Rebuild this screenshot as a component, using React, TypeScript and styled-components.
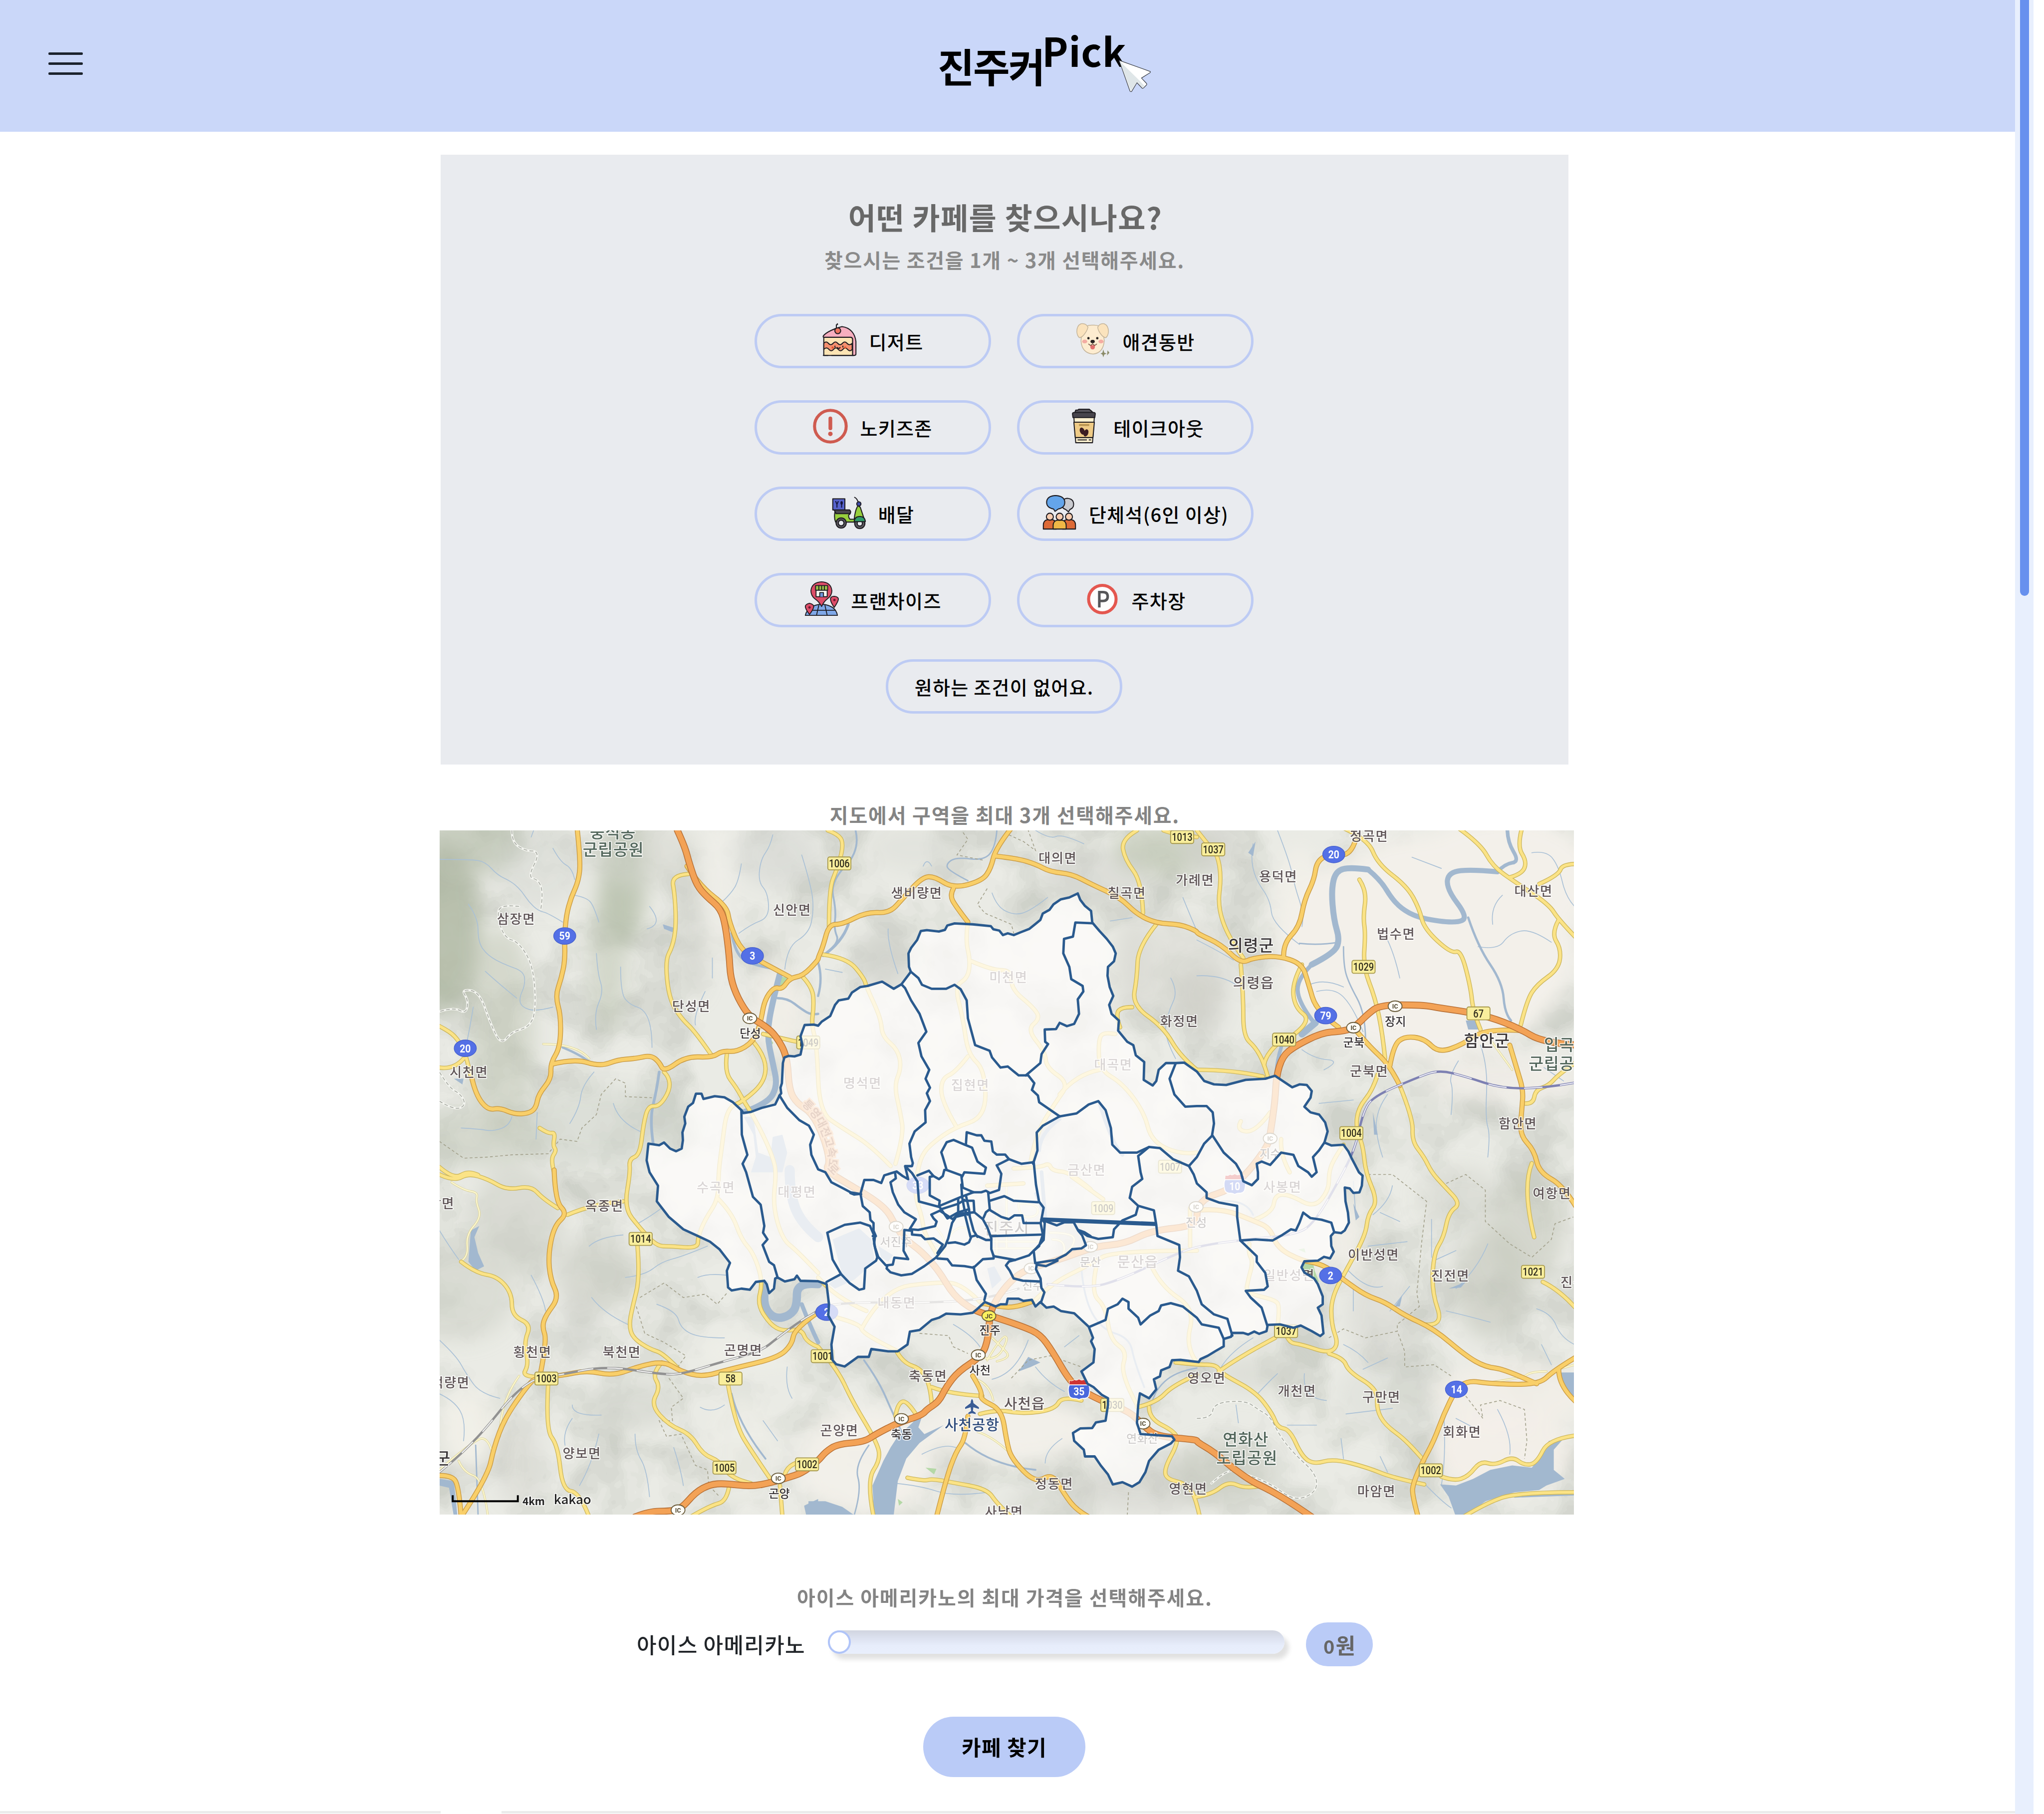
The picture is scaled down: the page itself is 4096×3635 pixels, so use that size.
import React from "react";
import styled, { createGlobalStyle } from "styled-components";

const FONT = '"Noto Sans CJK KR", "Noto Sans", sans-serif';

const GlobalStyle = createGlobalStyle`
  * { box-sizing: border-box; }
  html, body { margin: 0; padding: 0; background: #ffffff; overflow: hidden; }
  body { font-family: ${FONT}; color: #212529; }
  button { font-family: inherit; cursor: pointer; }
`;

/* ---------- page frame ---------- */

const Page = styled.div`
  display: grid;
  grid-template-columns: 4038px 37px 1fr;
  width: 4096px;
  height: 3635px;
  overflow: hidden;
  background: #ffffff;
`;

const Main = styled.div`
  display: flex;
  flex-direction: column;
  height: 3635px;
`;

const ScrollTrack = styled.div`
  display: flex;
  justify-content: center;
  background: #e8effd;
`;

const ScrollThumb = styled.div`
  width: 18px;
  height: 1194px;
  border-radius: 0 0 9px 9px;
  background: #6790ee;
`;

/* ---------- header ---------- */

const Header = styled.header`
  display: flex;
  align-items: flex-start;
  flex: none;
  height: 264px;
  padding-left: 97px;
  background: #cad7f9;
`;

const MenuButton = styled.div`
  display: flex;
  flex-direction: column;
  gap: 15px;
  width: 69px;
  margin-top: 105px;
`;

const MenuLine = styled.span`
  height: 5px;
  border-radius: 2px;
  background: #1c232d;
`;

const Logo = styled.div`
  display: flex;
  align-items: flex-start;
  margin-left: 1713px;
  color: #000000;
  font-weight: 700;
  font-size: 80px;
  line-height: 80px;
  white-space: nowrap;
`;

const LogoKorean = styled.span`
  margin-top: 90px;
  letter-spacing: -2.6px;
`;

const LogoLatin = styled.span`
  margin-top: 60px;
  margin-left: -4px;
  font-size: 79px;
  letter-spacing: 0.8px;
`;

const LogoCursor = styled.svg`
  width: 66px;
  height: 67px;
  margin: 119px 0 0 -16px;
`;

/* ---------- condition panel ---------- */

const Panel = styled.section`
  display: flex;
  flex-direction: column;
  align-items: center;
  flex: none;
  width: 2260px;
  height: 1222px;
  margin: 46px 0 0 883px;
  padding: 84px 2px 0 0;
  background: #e9ebef;
`;

const Title = styled.h1`
  margin: 0 -5px 0 0;
  color: #686868;
  font-weight: 700;
  font-size: 60px;
  line-height: 80px;
  letter-spacing: 1.5px;
`;

const Subtitle = styled.p`
  margin: 16px -2px 0 0;
  color: #8a8a8a;
  font-weight: 700;
  font-size: 40px;
  line-height: 60px;
  letter-spacing: 1.7px;
`;

const ConditionGrid = styled.div`
  display: grid;
  grid-template-columns: 474px 474px;
  gap: 64px 52px;
  margin: 79px 0 64px;
`;

const Condition = styled.button`
  display: flex;
  align-items: center;
  justify-content: center;
  gap: 24px;
  width: 474px;
  height: 109px;
  padding: 0;
  border: 5px solid #bdcbf4;
  border-radius: 55px;
  background: transparent;
  color: #000000;
  font-weight: 500;
  font-size: 38px;
  line-height: 56px;
  letter-spacing: 1.3px;
`;

const ConditionIcon = styled.svg`
  flex: none;
  width: 70px;
  height: 70px;
  margin-bottom: 6px;
`;

const Caption = styled.p<{ $top: number; $spacing: number }>`
  flex: none;
  width: 4027px;
  margin: ${(p) => p.$top}px 0 0;
  color: #848484;
  font-weight: 700;
  font-size: 40px;
  line-height: 58px;
  letter-spacing: ${(p) => p.$spacing}px;
  text-align: center;
`;

const MapView = styled.svg`
  display: block;
  flex: none;
  width: 2273px;
  height: 1371px;
  margin: 3px 0 0 881px;
  overflow: hidden;
`;

/* ---------- price ---------- */

const PriceRow = styled.div`
  display: flex;
  align-items: center;
  flex: none;
  height: 88px;
  margin: 22px 0 0 1276px;
`;

const PriceLabel = styled.label`
  width: 383px;
  margin-bottom: 3px;
  color: #212529;
  font-weight: 500;
  font-size: 43px;
  line-height: 60px;
  letter-spacing: 1.3px;
`;

const SliderTrack = styled.div`
  display: flex;
  width: 915px;
  height: 47px;
  margin-bottom: 9px;
  border-radius: 24px;
  background: linear-gradient(#d1d5e0 0%, #dbe0ee 30%, #e7edfb 65%, #e9effc 100%);
  box-shadow: 9px 11px 10px rgba(0, 0, 0, 0.12);
`;

const SliderThumb = styled.div`
  width: 46px;
  height: 47px;
  border: 4px solid #b0c4f8;
  border-radius: 50%;
  background: #ffffff;
`;

const PriceBadge = styled.div`
  display: flex;
  align-items: baseline;
  justify-content: center;
  width: 134px;
  height: 88px;
  margin-left: 43px;
  border-radius: 44px;
  background: #bacbf7;
  color: #666666;
  font-weight: 700;
  font-size: 43px;
  line-height: 88px;
`;

const PriceDigits = styled.span`
  margin-right: 2px;
  font-size: 38px;
`;

const SearchButton = styled.button`
  flex: none;
  width: 325px;
  height: 121px;
  margin: 101px 0 0 1850px;
  padding: 0 0 3px;
  border: 0;
  border-radius: 61px;
  background: #bacbf7;
  color: #000000;
  font-weight: 700;
  font-size: 42px;
  letter-spacing: 1.4px;
`;

const FooterEdge = styled.div`
  display: flex;
  flex: none;
  height: 5px;
  margin-top: 68px;
  padding-left: 883px;
  background: #ececec;
`;

const FooterTab = styled.div`
  width: 122px;
  background: #ffffff;
`;

/* ---------- condition icons ---------- */

const INK = "#1d1b20";

const CakeIcon = () => (
  <ConditionIcon viewBox="0 0 75 75">
    <g stroke={INK} strokeWidth="2.2" strokeLinejoin="round" strokeLinecap="round">
      <path d="M3 32h62v39H3z" fill="#fde4b4" />
      <path d="M3 45q5-6 10 0t10 0 10 0 10 0 10 0 11 0v13q-5 6-10 0t-10 0-10 0-10 0-10 0-11 0z" fill="#f5906f" />
      <path d="M2 29C8 21 28 12 42 9c18 2 28 15 30 32v27q0 3-4 3h-3V37q0-5-5-5H3q-2 0-1-3z" fill="#f6aebf" />
      <circle cx="33" cy="18" r="6.3" fill="#ef7460" />
      <path d="M30 11V5q4 0 2-2" fill="none" />
      <path d="M2 71h10M20 71h48" />
      <path d="M27 51v2M44 51v2M32 54q3 4 6 0" fill="none" />
    </g>
    <circle cx="22" cy="54" r="2.4" fill="#e4572f" />
    <circle cx="49" cy="54" r="2.4" fill="#e4572f" />
  </ConditionIcon>
);

const DogIcon = () => (
  <ConditionIcon viewBox="0 0 75 75">
    <g stroke="#c4b49a" strokeWidth="1.6">
      <path d="M14 16Q22 5 38 6q16-1 21 11l3 22Q60 66 38 68 14 66 12 40z" fill="#fdecd0" />
      <path d="M27 10Q22 1 12 3 3 7 3 20q1 10 6 13 6-1 12-10 5-7 6-13z" fill="#fbe3bd" />
      <path d="M48 10Q53 1 62 3q9 4 9 17-1 10-6 13-6-1-12-10-5-7-5-13z" fill="#fbe3bd" />
    </g>
    <circle cx="28" cy="34" r="2.6" fill="#2a2522" />
    <circle cx="47" cy="34" r="2.6" fill="#2a2522" />
    <ellipse cx="20" cy="41" rx="5.500" ry="4" fill="#f4aca3" />
    <ellipse cx="55" cy="41" rx="5.500" ry="4" fill="#f4aca3" />
    <ellipse cx="37" cy="41" rx="4.6" ry="3.6" fill="#26211f" />
    <path d="M32 49h10q1 9-5 9t-5-9z" fill="#e2706d" />
    <path d="M28 46q5 6 9 0 4 6 9 0" fill="none" stroke="#6a4a3c" strokeWidth="1.6" />
    <path d="M60 58l2 7 5 2-5 2-2 6-2-6-4-2 4-2zM69 60l4 5-5 6z" fill="#8b8b68" />
  </ConditionIcon>
);

const NoKidsIcon = () => (
  <ConditionIcon viewBox="0 0 75 75">
    <circle cx="37.5" cy="37.5" r="34" fill="none" stroke="#cf5b50" strokeWidth="6.5" />
    <path d="M37.5 21v21" stroke="#cf5b50" strokeWidth="8" strokeLinecap="round" />
    <circle cx="37.5" cy="54" r="4.8" fill="#cf5b50" />
  </ConditionIcon>
);

const CupIcon = () => (
  <ConditionIcon viewBox="0 0 75 75">
    <g stroke={INK} strokeWidth="2.2" strokeLinejoin="round">
      <path d="M16 18h44l-4 55H20z" fill="#fdf0cf" />
      <path d="M16 29h44l-3 33H19z" fill="#efcb86" />
      <path d="M20 3l4 0 3-2h22l6 5 3 5H17z" fill="#55525a" />
      <path d="M13 11q0-3 4-3h41q4 0 4 3l-1 8H14z" fill="#47444c" />
    </g>
    <path d="M27 35h22" stroke="#b99450" strokeWidth="4" />
    <ellipse cx="34" cy="48" rx="5" ry="8" fill="#3c1d22" transform="rotate(-22 34 48)" />
    <ellipse cx="42" cy="52" rx="5" ry="8" fill="#3c1d22" transform="rotate(20 42 52)" />
    <path d="M24 67h20M48 67h5" stroke={INK} strokeWidth="2" />
  </ConditionIcon>
);

const ScooterIcon = () => (
  <ConditionIcon viewBox="0 0 75 75">
    <g stroke={INK} strokeWidth="2.200" strokeLinejoin="round" strokeLinecap="round">
      <path d="M50 5q6 3 8 12l9 35" fill="none" />
      <path d="M8 34h32q3 6-3 9 0 6 3 9h9q2-20 8-29l5 3 8 24q2 8-6 8H9Q5 48 8 34z" fill="#97cf3d" />
      <path d="M6 32h33q5 4 0 8H10z" fill="#4a474e" />
      <path d="M3 8h26v24H3z" fill="#5763cc" />
      <circle cx="59" cy="19" r="4.500" fill="#3f4aa8" />
      <circle cx="21" cy="60" r="11" fill="#5b585f" />
      <circle cx="21" cy="60" r="6" fill="#e8ebef" />
      <circle cx="61" cy="61" r="11" fill="#5b585f" />
      <circle cx="61" cy="61" r="5.500" fill="#e8ebef" />
      <path d="M49 57q1-11 12-11t12 11z" fill="#2f9c6a" />
    </g>
    <path d="M9 13l3 7 3-7M12 19v8M22 20v7" stroke="#14143a" strokeWidth="2.200" fill="none" />
    <ellipse cx="22" cy="17" rx="2.600" ry="4" fill="#14143a" />
  </ConditionIcon>
);

const GroupIcon = () => (
  <ConditionIcon viewBox="0 0 75 75">
    <g stroke={INK} strokeWidth="2.2" strokeLinejoin="round">
      <path d="M54 7q14 1 14 13 0 8-8 11l-3 5-6-5q-8-2-8-11 0-12 11-13z" fill="#c9cacf" />
      <path d="M29 1q20 1 20 15 0 11-14 14l-7 5-3-5Q10 27 10 16 10 2 29 1z" fill="#64a5ea" />
      <path d="M3 73V64q0-9 8-11h12q8 2 8 11v9z" fill="#dd6a37" />
      <path d="M44 73V64q0-9 8-11h12q8 2 8 11v9z" fill="#dd6a37" />
      <path d="M24 73V65q0-9 8-11h12q8 2 8 11v8z" fill="#efb746" />
      <ellipse cx="17" cy="46.500" rx="7.500" ry="7.500" fill="#f8cdb0" />
      <ellipse cx="38" cy="46.500" rx="7.500" ry="7.500" fill="#f8cdb0" />
      <ellipse cx="58" cy="46.500" rx="7.500" ry="7.500" fill="#f8cdb0" />
    </g>
  </ConditionIcon>
);

const FranchiseIcon = () => (
  <ConditionIcon viewBox="0 0 75 75">
    <g stroke={INK} strokeWidth="2" strokeLinejoin="round">
      <path d="M3 73q5-22 35-24 30 2 34 24z" fill="#7fa8e8" />
      <path d="M8 62h60M27 73l5-22M50 73l-5-22" fill="none" />
      <path d="M38 54Q33 44 23 37 15 30 15 20 17 2 38 1q20 1 22 19 0 10-9 17-9 7-13 17z" fill="#dc4d68" />
      <rect x="26" y="10" width="24" height="23" fill="#f4f6f2" />
      <path d="M25 9h26v10H25z" fill="#9cc24a" />
      <path d="M32 9v10M38 9v10M44 9v10" />
      <path d="M34 33v-9h8v9" fill="#6f96de" />
      <path d="M12 71Q3 59 3 54t9-7q9 2 9 7t-9 17z" fill="#dc4d68" />
      <path d="M65 56Q57 44 57 38t8-6q9 1 9 6t-9 18z" fill="#dc4d68" />
    </g>
    <circle cx="12" cy="56" r="2.6" fill="#6c1830" />
    <circle cx="65.500" cy="40" r="2.6" fill="#6c1830" />
  </ConditionIcon>
);

const ParkingIcon = () => (
  <ConditionIcon viewBox="0 0 75 75">
    <circle cx="37.5" cy="38" r="29.5" fill="#fdfdfd" stroke="#e4574f" strokeWidth="6.5" />
    <path d="M31 56V23h8q10 0 10 9.500t-10 9.500h-8" fill="none" stroke="#555659" strokeWidth="5.500" />
  </ConditionIcon>
);

const CONDITIONS: { label: string; Icon: React.FC }[] = [
  { label: "디저트", Icon: CakeIcon },
  { label: "애견동반", Icon: DogIcon },
  { label: "노키즈존", Icon: NoKidsIcon },
  { label: "테이크아웃", Icon: CupIcon },
  { label: "배달", Icon: ScooterIcon },
  { label: "단체석(6인 이상)", Icon: GroupIcon },
  { label: "프랜차이즈", Icon: FranchiseIcon },
  { label: "주차장", Icon: ParkingIcon },
];

/* ---------- map geometry ----------
   Every shape is a list of points; a "X:" prefix switches to tile X,
   whose local units are converted to map units. */

const TILES: Record<string, [number, number, number, number]> = {
  A: [951, 1780, 1.912, 2.063],
  B: [1771, 1780, 1.912, 2.063],
  C: [2591, 1780, 1.889, 2.063],
  D: [951, 2540, 1.912, 2.063],
  E: [1771, 2540, 1.912, 2.063],
  F: [2591, 2540, 1.889, 2.063],
  G: [1841, 2420, 3, 3],
};

const at = (tile: string, u: number, v: number): [number, number] => {
  const [x, y, sx, sy] = TILES[tile];
  return [+(x + u / sx).toFixed(1), +(y + v / sy).toFixed(1)];
};

const trace = (src: string, close = false) => {
  let tile = "A";
  const pts: string[] = [];
  src
    .trim()
    .split(/\s+/)
    .forEach((tok) => {
      let t = tok;
      if (t[1] === ":") {
        tile = t[0];
        t = t.slice(2);
      }
      const [u, v] = t.split(",").map(Number);
      pts.push(at(tile, u, v).join(" "));
    });
  return "M" + pts.join("L") + (close ? "Z" : "");
};

/* smooth variant: rounds every corner through segment midpoints */
const curve = (src: string) => {
  const p = trace(src)
    .slice(1)
    .split("L")
    .map((s) => s.split(" ").map(Number));
  if (p.length < 3) return trace(src);
  let d = `M${p[0][0]} ${p[0][1]}`;
  for (let i = 1; i < p.length - 1; i++) {
    const a = p[i];
    const b = p[i + 1];
    const f = i === p.length - 2 ? 1 : 0.5;
    d += `Q${a[0]} ${a[1]} ${a[0] + (b[0] - a[0]) * f} ${a[1] + (b[1] - a[1]) * f}`;
  }
  return d;
};

const HIGHWAYS = [
  "A:985,40 1015,110 1035,190 1065,285 1105,335 1165,390 1185,470 1200,600 1205,700 1235,790 1285,875 1350,915 1395,960 1440,1050 1448,1200 1480,1260 1540,1300 B:20,1400 50,1520 E:30,-10 120,50 230,120 290,175 320,240 360,300 430,355 500,440 560,550 640,615 710,640 850,690 920,725 970,800 1040,930 1090,975 1180,1025 1290,1070 1345,1130 1400,1180 1568,1195 F:0,1205 70,1250 150,1325 230,1385 290,1415 390,1480 470,1540",
  "C:1560,1000 1420,990 1310,920 1200,875 1100,850 1000,835 925,820 750,820 700,860 640,925 590,938 510,945 400,1005 350,1050 325,1140 320,1250 300,1400 290,1450 210,1568 F:130,80 40,110 0,160 E:1568,240 1380,260 1270,320 1150,330 1000,390 870,430 800,480 735,570 710,640 705,740 680,820 580,890 530,960 500,1025 450,1060 430,1085 330,1120 240,1170 190,1205 80,1215 30,1250 0,1290 D:1500,1345 1440,1365 1380,1385 1290,1405 1180,1390 1120,1395 1060,1430 1000,1505 950,1515 870,1515 810,1540",
];

const MAIN_ROADS = [
  "A:570,30 585,180 575,270 545,340 525,420 518,520 520,620 505,700 480,780 503,870 500,1010 460,1080 463,1150 410,1220 400,1280 370,1305 310,1308 250,1280 200,1290 150,1220 135,1150",
  "A:465,1085 560,1060 665,1095 740,1065 810,1060 875,1045 910,1075 930,1120 1020,1050 1130,1055 1170,1025 1230,1030 1300,985 1330,900 1345,800 1385,740 1420,750 1450,700 1505,690 1568,620 B:0,610 20,560 45,460 100,460 200,405 295,410 350,345 430,250 480,245 560,300 680,265 715,210 735,120 800,30",
  "A:1450,695 1380,655 1320,620 1245,570 1200,450 1190,380 1080,290 1025,200",
  "B:560,300 545,330 570,380 620,450",
  "B:735,155 820,165 900,190 960,225 1050,235 1130,280 1250,340 1320,415 1400,455 1500,460 1568,490 C:0,500 100,550 180,635 230,610 330,600 430,635 455,720 490,850 580,920",
  "C:355,600 355,545 420,470 440,350 480,260 490,180 540,145 630,155 650,80",
  "C:640,920 700,1000 790,1090 830,1180",
  "C:790,1090 805,1000 850,960 930,970 990,1035 1090,995 1160,940 1280,930 1330,935",
  "C:1280,1000 1310,1110 1335,1200 1330,1280 1320,1400 1380,1470 1400,1568 F:1500,60 1560,170",
  "D:475,-10 480,130 530,185 475,240 450,370 460,480 495,560 440,640 425,690 445,750 420,890",
  "D:90,1540 200,1360 225,1230 270,1100 360,960 400,915 500,910 610,885 720,910 830,865 930,845 1000,890 1090,915 1200,880 1400,830 1460,770 1470,700 1568,625",
  "D:0,1355 50,1355 80,1400 90,1540",
  "E:680,585 740,600 820,605 880,580",
  "E:490,1540 530,1370 570,1250 610,1190 620,1090",
  "E:640,910 680,980 670,1015 760,1060 780,1200 800,1280 900,1390 970,1345 1020,1440 1070,1510 1120,1540",
  "F:0,170 100,160 240,220 300,250 330,340 430,395 490,405 540,430 600,480 690,550 770,580 850,640 970,700 1100,820 1180,870 1260,880 1390,945",
  "F:1560,820 1460,885 1400,950 1200,945 1110,930 1060,970 1010,1080 970,1200 920,1300 885,1390 880,1440 905,1540",
  "F:1480,880 1480,960 1560,1035",
];

const ROADS = [
  "A:1030,235 960,240 975,330 980,470 965,560 935,620 950,790 1000,880 1060,940 1130,1050",
  "A:0,915 45,940 80,980 110,1040 130,1140",
  "A:0,1100 60,1110 100,1060",
  "A:1190,1040 1180,1120 1230,1190 1260,1250 1290,1300 1340,1400 1380,1500 1395,1568 D:1380,150 1420,300 1480,350 1568,450",
  "A:1300,985 1350,1050 1350,1160 1260,1250 1190,1280 1170,1450 1155,1568 D:1155,120 1100,210 1070,290 1070,340 950,330 900,330 830,250 765,160 790,0 A:785,1510 830,1490 845,1350 865,1270 910,1275 955,1200 950,1140 930,1120",
  "D:1155,120 1210,180 1250,300 1300,360 1340,490 1315,590 1370,680 1420,710 1500,700 1520,760 1568,780",
  "D:530,190 640,140 760,130",
  "D:820,330 830,470 800,600 785,680 800,740 870,790 930,810 1000,890",
  "D:920,850 880,900 915,960 875,1040 950,1130 1040,1170 1090,1260 1160,1290 1210,1370 1290,1390",
  "D:0,10 60,40 120,5 200,30 280,80 380,60 430,120 490,160",
  "A:0,1545 60,1600 120,1560 160,1580",
  "D:90,400 150,450 240,465 300,540 300,640 380,680 350,760 370,860 340,915 420,915",
  "D:450,950 440,1150 490,1220 510,1420 580,1430 620,1540",
  "D:1195,950 1225,1130 1300,1260 1370,1370",
  "D:1410,1400 1420,1540",
  "D:1200,1400 1190,1470 1120,1490 1040,1540",
  "D:1430,1350 1450,1280 1568,1290",
  "A:415,1370 450,1395 480,1390 470,1450 485,1470 460,1510 475,1568",
  "A:1340,950 1420,970 1480,985 1568,1000",
  "A:1500,690 1545,740 1550,830 1540,905 B:-5,1000 5,1300 100,1370 220,1450 300,1540",
  "B:40,40 90,60 105,110 80,210 45,300 45,470",
  "B:20,595 120,610 190,700 200,740 260,880 265,960 330,1020 345,1100 315,1180 340,1300 355,1400 320,1530",
  "B:620,450 610,530 630,620 620,700 565,735 600,880 620,1040 690,1110 695,1320 560,1370 470,1440 430,1490 410,1568 E:400,100 430,200 440,280 500,380",
  "B:635,625 720,665 800,665 800,750 890,830 920,880 865,930 940,1030 945,1100 1040,1170 980,1260 900,1400 880,1520",
  "B:1230,950 1180,940 1160,980 1165,1110 1260,1170 1350,1300 1380,1430 1500,1490 1568,1480",
  "B:1165,1110 1070,1130 1000,1220",
  "B:620,1050 570,1120 510,1150 510,1250 570,1360",
  "B:1320,40 1255,80 1270,170 1340,270 1345,410",
  "B:1400,460 1325,560 1320,700 1300,820 1430,920 1500,1050 1568,1110",
  "B:1300,830 1245,830 1235,880 1250,920",
  "B:1430,40 1480,60 1568,70",
  "C:0,40 50,110 85,150 100,250 85,380 130,520 190,610",
  "C:180,640 190,780 190,960 240,1010 275,1080 290,1140",
  "C:0,1110 150,1110 270,1140",
  "C:340,985 280,1040 275,1090",
  "C:430,640 390,720 400,830 470,890 400,950",
  "C:665,260 695,310 680,430 690,500 680,650 730,790 760,950 770,1060",
  "C:600,30 700,80 740,190 860,290 910,390 930,480 1040,590 1080,575 1120,740 1130,850 1160,930",
  "C:1070,30 1160,100 1210,200 1300,270 1440,370 1480,440 1560,530",
  "C:1330,30 1310,110 1350,180 1330,235 1280,250",
  "C:1400,280 1480,240 1495,190 1560,190",
  "C:1480,440 1450,500 1490,570 1480,660 1390,730 1350,800 1325,910",
  "C:830,1180 885,1330 880,1430 930,1500 960,1568 F:1010,60 1080,140 1030,180 1010,290 970,360 960,530 1010,690 930,680",
  "C:740,1130 720,1200 660,1280 650,1370 680,1450 690,1568 F:740,130 700,190 690,280 620,420 550,560 550,680 580,770 540,810 430,770 370,760 360,700",
  "C:1560,1070 1480,1130 1440,1180 1385,1200 1375,1265 1335,1260",
  "C:600,1445 560,1510 540,1568 F:540,80 480,160 380,100 320,100 310,180 240,210",
  "C:180,1340 160,1380 240,1390 300,1300",
  "C:345,1420 340,1490 380,1568",
  "F:1370,-40 1330,70 1380,290",
  "F:1415,490 1490,530 1560,620",
  "F:330,690 340,600 320,570 200,540 210,480 230,400 210,360 215,320",
  "F:90,890 180,820 320,740",
  "E:1480,850 1568,860 F:80,860 100,900 240,980 310,1080 330,1140 380,1150 430,1270 480,1305 560,1280 700,1320 800,1365 930,1395",
  "F:540,810 600,830 620,890 740,970 735,1060 770,1130 860,1200 930,1290",
  "F:1000,1360 1050,1380 1110,1360 1160,1290 1220,1310 1290,1270 1340,1310 1390,1300 1440,1190 1560,1175",
  "F:1090,1540 1180,1480 1310,1430 1560,1430",
  "F:0,1450 60,1440 130,1380 200,1415 270,1400",
  "E:1568,905 1470,950 1400,1030 1320,1050",
  "E:1370,1050 1370,1100 1480,1160 1490,1210 1435,1320 1440,1370 1520,1390 1560,1440 1580,1540",
  "E:0,780 80,880 140,1020 240,1200 260,1280 200,1380 230,1540",
  "E:325,800 350,850 430,880 465,960 470,1030",
  "E:320,1090 330,1030 370,1020 410,1090",
  "E:470,960 540,990 680,1000",
  "E:670,1080 740,1060 850,1080 980,1060 1010,1000 1090,1020",
  "E:370,1365 440,1380 470,1370 550,1385 700,1415 740,1480 800,1540",
  "E:180,700 270,520 500,490 600,500 680,590",
  "E:0,470 70,560 200,620",
  "E:80,650 180,680 180,720 330,800",
  "E:890,580 960,500 1130,410 1220,350 1568,350",
  "E:1380,420 1420,510 1560,610 1520,780 1568,850",
  "E:1150,430 1130,540 1190,600 1210,750 1280,800 1250,900 1320,1040",
  "G:1060,335 1230,330 1290,300 1310,350 1430,360 1560,470",
  "E:1050,20 1180,120",
  "E:1540,160 1540,330",
  "E:700,60 850,50",
];

const STREETS = [
  "E:700,840 760,730 790,740 740,840 690,830",
  "E:720,740 760,780 800,830 740,845",
  "E:640,920 710,940 725,1020",
  "E:660,1160 720,1180 790,1250",
  "E:740,170 740,370",
  "E:780,60 780,340",
  "E:830,140 910,140 910,200 830,200 830,140",
  "E:720,310 920,310",
  "E:720,340 910,340",
  "E:960,270 1060,270 1060,330 1020,370",
  "E:970,300 1040,300 1010,380",
  "E:480,240 540,300 520,360",
  "E:450,310 520,340",
  "E:540,290 600,200 660,300",
  "D:50,45 100,80 160,90 150,130 175,200 110,280 120,380 85,400",
  "A:430,995 570,995 620,1060",
  "D:0,1330 150,1190 200,1190 215,1240",
  "D:80,1290 100,1340 180,1370 200,1530",
  "D:250,1180 250,1030 330,910",
  "F:1190,940 1330,920 1370,890 1430,890",
  "F:1480,880 1545,860",
  "C:1190,960 1290,1110",
];

const WATER_LINES: [number, string][] = [
  [13, "A:1410,680 1380,800 1355,950 1380,1080 1400,1180 1360,1260 1260,1300"],
  [5, "A:1400,790 1440,790 1500,840 1540,865 1568,860"],
  [6, "A:1210,500 1225,590 1290,640 1370,655"],
  [6, "A:885,1440 870,1330 900,1200 910,1120"],
  [5, "A:510,1010 590,1045 640,1090"],
  [4, "B:155,40 175,130 50,270 75,400 65,480 90,545 20,600"],
  [5, "B:0,630 20,700 0,780"],
  [6, "B:20,600 100,540 125,460"],
  [3, "B:740,40 735,110 690,175 570,160 530,190 540,220 620,265"],
  [13, "C:700,215 630,205 570,220 550,300 560,440 585,530 560,590 470,640"],
  [9, "C:480,630 410,700 415,810 480,900"],
  [15, "C:485,900 430,950"],
  [8, "C:345,1010 330,1060 325,1120"],
  [11, "C:700,215 750,260 800,350 850,400 920,435 1060,455 1110,430 1020,300 1030,225 1130,215 1230,225"],
  [8, "C:1230,225 1260,190 1320,180 1270,90 1270,30"],
  [5, "C:1110,430 1150,560 1250,720 1260,860 1285,890"],
  [3, "C:600,560 600,640 620,720 690,860 690,980"],
  [3, "C:420,545 500,555 580,540"],
  [18, "D:1350,500 1340,570 1360,630 1400,655 1450,640 1480,600 1480,490 1568,500"],
  [9, "D:1500,590 1540,700 1568,760"],
  [22, "D:1450,-10 1450,100 1500,230 1568,290"],
  [4, "E:190,840 250,930 310,1080 350,1170"],
  [3, "E:210,1220 150,1310 180,1420 150,1530"],
  [4, "E:610,1210 720,1310 900,1330"],
  [4, "D:1210,990 1240,1130 1350,1280"],
  [3, "D:150,1220 160,1530"],
  [3, "E:1568,875 1480,890 1390,980 1380,1040"],
  [8, "B:1000,1330 920,1390 915,1470"],
  [8, "B:1165,1260 1220,1450 1260,1490"],
  [7, "G:1205,500 1250,600 1260,670"],
  [8, "E:925,0 940,200"],
  [4, "E:1090,430 1100,560 1170,700 1290,740 1310,850 1350,960"],
  [4, "F:100,130 200,120 230,190"],
  [4, "F:1545,1440 1300,1450"],
];

const CREEKS = [
  "A:0,170 130,170 190,180 240,240 300,270 340,310 370,360 410,400 450,410 510,450",
  "A:470,120 500,180 550,210 560,260",
  "A:390,40 380,70",
  "A:560,330 610,340 640,380 660,450",
  "A:650,590 655,680 680,760 640,860 650,930",
  "A:750,650 750,770 790,820 850,840 880,930 880,1010",
  "A:120,370 160,430 160,540 200,600 270,640 350,670 355,730 330,790 340,830 400,850 470,830",
  "A:190,670 240,720 320,790",
  "A:140,830 130,900 115,980",
  "A:1380,60 1370,110 1330,170 1320,270 1360,320 1365,430 1290,460 1240,500",
  "A:1250,190 1240,260 1210,320 1170,360",
  "A:1500,150 1540,290 1550,400 1530,500 1440,560 1430,660",
  "A:1130,610 1130,700",
  "A:870,380 930,460 860,480",
  "A:1100,760 1050,870 1060,910",
  "A:640,1120 590,1180 580,1280 540,1350",
  "A:90,1370 170,1375 220,1385 290,1360 300,1320",
  "A:405,1300 400,1420",
  "A:720,1260 740,1340 830,1385",
  "B:435,200 450,160 470,200",
  "B:290,480 285,540 330,680",
  "B:720,320 740,380 810,420 880,400 950,340",
  "B:900,40 960,80 1010,55 1100,100",
  "B:1510,340 1540,420 1568,490",
  "B:1460,700 1490,760 1450,850 1430,960 1480,1060",
  "B:30,660 100,675",
  "B:1210,445 1300,430",
  "C:230,100 220,160 240,260 300,350 310,460 420,550",
  "C:330,40 380,180 400,290 440,420 430,470",
  "C:0,530 90,580 150,620",
  "C:0,690 100,685 160,730",
  "C:880,160 1000,210",
  "C:780,530 810,600 830,700",
  "C:1150,560 1230,575 1280,500 1370,480 1450,540",
  "C:1210,460 1200,380 1250,330",
  "C:1370,140 1430,130 1480,200 1510,340 1545,380",
  "C:460,730 520,700 600,740",
  "C:490,760 560,740 640,830 680,940",
  "C:1160,1000 1190,1090 1180,1330 1200,1400 1190,1500",
  "C:1070,1070 1030,1140 1050,1200 1040,1310",
  "C:780,1220 740,1280 730,1400 760,1500",
  "C:430,1020 480,1060 590,1070 520,1110",
  "C:500,1260 640,1245",
  "C:1420,1100 1500,1160",
  "D:0,260 40,330 80,390",
  "D:820,230 870,200 920,160",
  "D:620,330 660,290 760,280",
  "D:770,470 850,460 920,400 1010,375 1110,330",
  "D:1070,470 1110,450 1190,460",
  "D:380,460 430,560 440,620",
  "D:630,560 680,630 780,680",
  "D:900,590 980,620 1000,700 1080,740 1180,740",
  "D:0,750 70,820 110,900 170,990 250,1010",
  "D:0,990 60,1020 110,1110 100,1200",
  "D:550,1040 550,1090 670,1085",
  "D:550,1100 510,1160 520,1220",
  "D:810,1170 810,1240 860,1330 870,1450",
  "D:1080,1050 1130,1080 1180,1040",
  "D:970,1230 1000,1330 1010,1400",
  "D:1340,1110 1400,1200",
  "D:1440,870 1430,960 1460,1010",
  "D:660,1170 630,1310 580,1400",
  "E:560,680 640,730 670,780",
  "E:870,750 820,900 720,925",
  "E:900,870 950,940 1020,980",
  "E:1080,730 1020,780",
  "E:940,1300 940,1240 1010,1190",
  "E:430,1260 520,1210 570,1230",
  "E:320,1390 420,1400 560,1450 700,1430",
  "F:640,40 650,190",
  "F:800,60 790,130 720,190",
  "F:750,180 830,220",
  "F:700,330 860,310",
  "F:620,440 700,530 760,510",
  "F:640,500 640,620",
  "F:870,510 790,620",
  "F:960,210 960,380",
  "F:980,390 1060,350",
  "F:1060,520 1150,430 1190,320",
  "F:1390,610 1450,630 1490,740 1545,770",
  "F:1020,620 1100,640 1200,670",
  "F:1410,770 1450,860",
  "F:100,870 140,800 230,740",
  "F:600,770 660,800 700,850",
  "F:780,830 680,880",
  "F:240,1000 290,940 330,900",
  "F:440,900 430,1010 530,1020",
  "F:610,1080 800,1055",
  "F:1010,1080 1020,1280 1000,1400",
  "F:1230,1060 1290,1180 1280,1260",
  "F:590,1190 600,1280",
  "F:750,1270 780,1340",
  "F:930,1390 1000,1470 1040,1500",
  "F:370,1130 490,1130",
  "F:160,1040 170,1120",
  "F:1060,1100 1130,1140",
];

const LAKES = [
  "E:440,1060 415,1140 440,1170 520,1130 420,1210 365,1280 330,1380 312,1540 232,1540 225,1400 270,1290 300,1230 330,1180 390,1120",
  "E:-40,1470 30,1470 100,1495 160,1540 -40,1540",
  "D:1510,1490 1568,1460 1568,1540 1520,1540",
  "F:995,1395 1060,1400 1130,1370 1200,1330 1290,1310 1370,1320 1400,1280 1440,1200 1500,1190 1460,1240 1460,1330 1505,1370 1430,1400 1400,1420 1300,1430 1180,1470 1100,1540 1060,1540 1030,1450",
  "F:1490,895 1560,895 1560,1030 1495,960",
  "D:130,260 165,240 145,290 160,360 185,420 150,440 120,400",
  "D:0,1370 60,1380 75,1540 60,1540 40,1410 0,1400",
  "E:60,300 170,250 220,300 235,400 150,480 70,520 45,500 95,440",
  "A:1260,1320 1300,1400 1310,1500 1290,1568 1420,1568 1440,1480 1420,1400 1380,1410 1370,1500 1320,1480 1300,1320",
  "E:830,890 870,825 920,850 880,870",
  "E:700,430 720,520 760,480 730,420",
  "E:250,330 310,370 290,400 260,380",
  "A:925,460 970,475 965,495 930,480",
  "A:60,1150 100,1150 95,1175",
  "F:1030,520 1100,490 1080,515",
  "F:640,140 665,200 650,215",
  "F:810,600 840,550 830,600",
  "C:1100,890 1150,890 1160,930 1110,930",
  "C:210,140 240,90 230,155",
  "C:720,1300 740,1400 725,1400",
];

const TRAILS = [
  "B:600,50 620,80 575,150 690,175",
  "B:700,300 660,370 690,410 800,460 810,500",
  "B:790,60 850,90 900,130 870,40",
  "A:0,1430 100,1505 200,1500 300,1490 450,1485 500,1420 570,1430 590,1370 650,1310 670,1220 730,1150 770,1170 770,1230 880,1235",
  "D:830,560 930,495 1010,560 1100,545 1150,590 1190,540",
  "D:815,600 850,720 930,760 1020,820 980,880",
  "D:950,920 1010,1010 960,1050 965,1110 910,1110 940,1180 1000,1170 1060,1310 1110,1330 1115,1400 1160,1450",
  "F:540,740 600,700 690,740 820,710 850,800 850,870 970,860 1040,910",
  "F:1100,1000 1170,1100 1160,1040 1240,1020 1340,1060 1350,1200 1340,1280",
  "F:700,10 800,10 940,130 920,310 900,540 910,600 820,680 820,710",
  "F:1020,50 1100,10 1180,80 1180,220 1280,320 1370,380 1450,300 1465,230 1540,200",
  "E:800,920 870,840 960,820 1090,870",
  "E:420,720 540,730 560,780 620,810",
  "E:1285,1430 1280,1530",
];

const PARK_EDGES = [
  "A:300,40 300,90 350,130 420,135 365,250 410,260 430,320 420,390",
  "A:330,380 250,370 240,430 270,520 330,540 390,650 400,850 370,920 300,940 255,1000 210,900 165,760 90,750 120,800 110,860 60,830 0,850",
  "A:0,1120 40,1190 90,1220 110,1270 60,1290 0,1250",
  "F:0,1100 60,1100 70,1030 200,1020 250,1060 300,1090 340,1180 400,1260 490,1350 490,1430 400,1470 300,1390 200,1350 130,1320 60,1390",
];

const CITY_EDGE =
  "A:865,1440 910,1447 930,1435 955,1462 980,1474 1003,1462 1008,1425 1006,1390 1018,1350 1014,1320 1030,1275 1050,1258 1062,1217 1085,1217 1093,1240 1140,1228 1180,1233 1215,1255 1250,1290 1258,1303 1290,1298 1335,1280 1390,1265 1408,1225 1415,1215 1412,1190 1418,1170 1422,1080 1428,1055 1445,1048 1470,1050 1495,1042 1503,1000 1495,960 1512,910 1550,908 1568,913 " +
  "B:15,895 50,870 70,820 85,800 125,792 140,765 175,740 205,735 265,716 313,748 345,728 384,672 376,650 374,590 385,565 410,530 425,490 450,486 500,492 525,485 535,465 565,456 640,460 715,468 725,482 750,488 765,508 785,500 810,508 840,495 875,480 900,458 920,440 930,412 958,395 975,370 1005,348 1040,340 1075,322 1085,350 1105,378 1130,400 1135,452 1165,490 1195,525 1220,560 1232,590 1225,625 1200,650 1198,690 1207,740 1222,780 1205,820 1215,860 1245,890 1242,935 1280,985 1305,1000 1315,1045 1350,1075 1348,1155 1385,1180 1400,1160 1410,1110 1440,1080 1480,1080 1515,1078 1568,1118 " +
  "C:30,1160 70,1175 120,1178 200,1155 280,1150 320,1137 345,1155 390,1188 420,1175 450,1178 470,1205 465,1235 440,1275 465,1300 500,1310 525,1345 535,1385 522,1435 550,1448 600,1445 620,1475 633,1505 645,1530 663,1568 " +
  "F:678,15 675,60 665,90 640,92 625,72 605,68 608,130 618,180 622,225 605,260 590,272 562,268 548,285 550,330 560,355 545,385 520,378 495,395 440,398 428,425 440,448 480,475 495,500 515,555 515,590 495,605 510,640 518,720 505,732 470,710 425,685 395,695 340,680 290,682 285,710 255,722 235,712 210,725 190,718 145,718 140,735 110,745 110,778 75,800 45,820 15,835 8,848 " +
  "E:1500,838 1465,840 1455,870 1420,885 1415,912 1390,925 1400,970 1370,1010 1332,988 1325,1040 1320,1120 1335,1170 1400,1175 1465,1180 1475,1195 1460,1212 1410,1240 1370,1290 1355,1340 1330,1385 1300,1405 1260,1385 1220,1395 1200,1350 1170,1310 1145,1270 1105,1270 1100,1240 1060,1200 1055,1165 1085,1145 1135,1143 1150,1118 1190,1110 1200,1040 1200,1010 1175,995 1140,960 1115,945 1090,890 1140,850 1145,790 1130,755 1138,740 1120,690 1090,660 1060,630 1005,620 975,600 945,605 920,580 900,600 885,570 850,575 830,565 785,565 780,590 755,590 735,600 690,580 660,610 640,628 590,635 530,632 500,650 470,660 420,705 380,712 370,770 330,800 290,800 220,790 210,825 165,825 110,868 75,858 60,840 55,770 68,690 42,640 45,590 35,500 0,487 " +
  "D:1495,485 1480,462 1470,478 1430,488 1400,470 1390,475 1385,520 1365,540 1355,500 1345,485 1310,490 1285,525 1250,520 1210,528 1195,515 1190,440 1203,405 1160,345 1120,310 1070,285 1010,255 950,200 900,130 905,60 870,0 A:858,1515 865,1440";

const DISTRICT_EDGES = [
  "A:1250,1290 1252,1400 1275,1490 1255,1530 1270,1568 D:1298,110 1330,145 1345,240 1340,270 1358,300 1338,325 1365,400 1385,415 1400,470",
  "A:1408,1225 1440,1280 1490,1335 1530,1360 1550,1400 1535,1445 1540,1490 1568,1555 E:30,0 55,45 100,70 135,90 178,98",
  "B:345,728 360,745 385,800 420,860 448,940 415,990 428,1050 460,1110 445,1150 463,1190 450,1215 463,1250 443,1290 445,1345 400,1385 378,1440 385,1500 G:405,300 400,320 355,320 375,405 340,385 300,355 220,380 200,430 150,410 90,410 65,500 25,505 0,495",
  "G:360,325 400,365 435,420 445,550 575,585",
  "B:384,672 415,700 430,730 470,748 530,748 565,730 590,750 615,800 620,880 650,1000 710,1025 720,1055 755,1100 785,1095 830,1135 870,1135 895,1170 885,1200 910,1225 915,1255 1000,1318",
  "B:1137,455 1065,452 1055,515 1018,525 1015,590 1040,650 1048,705 1095,735 1098,760 1075,795 1080,860 1060,905 1030,915 1000,900 985,928 938,930 940,985 952,995 925,1040 920,1080 860,1135",
  "B:1000,1318 1070,1305 1120,1265 1160,1250 1190,1290 1212,1370 1218,1445 1250,1480 1320,1480 1370,1455 1415,1460 1470,1510 1535,1540 1568,1500 C:30,1440 62,1405 70,1350 65,1300 40,1272 0,1272 B:1520,1275 1475,1220 1455,1150 1480,1082",
  "B:1000,1318 930,1360 905,1390 908,1470 890,1530 G:1190,290 1205,440 1225,550 1255,590 1240,670",
  "B:1370,1455 1325,1495 1335,1568 E:1342,30 1300,65 1290,115 1325,150 1390,170 1400,235 1405,285 1495,325 1498,380 1490,440 1535,465 1568,530 F:20,590 70,635 125,655 145,730",
  "E:1325,150 1315,190 1260,215 1225,255 1220,290 1160,298 1115,285 1085,262",
  "B:1535,1540 E:1555,10 1568,50 F:40,90 40,115 90,135 165,150 165,200 178,305 245,375 245,400 280,450 290,510 275,525 200,530 220,560 265,605 288,685",
  "C:65,1405 110,1480 160,1530 180,1568 F:190,40 225,58 250,30 250,0 C:245,1530 265,1520 300,1535 345,1480 395,1490 415,1540 455,1568 F:470,20 490,0 C:475,1500 500,1470 522,1435",
  "F:178,305 240,300 310,305 350,280 385,255 405,260 420,225 435,180 465,205 510,212 550,225 562,268",
  "E:1125,690 1190,660 1200,610 1240,590 1260,565 1285,580 1285,610 1325,650 1335,680 1375,640 1410,620 1420,595 1460,585 1510,600 1568,650 F:20,680 90,695 110,745",
  "G:65,500 80,580 125,620 130,670 150,690 150,740 165,775 145,775",
  "E:38,270 110,235 175,225 215,240 235,290 232,320 245,380 240,395 195,430 190,520 170,525 130,495 95,455 60,390 50,330 38,270",
  "E:35,490 95,455",
  "G:150,790 160,850 180,910 230,965 275,960 285,915 375,925 345,870 350,735 400,740",
  "G:240,965 235,985 260,1010 330,1030 400,1020 480,970 555,915 615,840 635,790 660,690 685,650 745,635",
  "G:290,365 295,400 260,425 275,490 310,570 350,620 425,665 385,730 440,735 550,710 560,680 540,660 525,635 580,610",
  "G:400,745 400,765 460,770 485,795 540,790 600,830 565,885",
  "G:435,380 510,350 540,385 575,405 600,385 610,345 625,345 600,260 590,230 625,165 670,150 740,180 790,200 825,290 880,330 870,370 740,360 725,390",
  "G:750,180 755,100 820,120 850,120 870,155 915,160 925,225 950,245 1005,245 1030,275 1110,305 1190,295",
  "G:1030,275 950,315 980,370 965,475 905,495 880,480 850,490 800,490 730,460 720,380 625,345",
  "G:540,385 515,390 515,510 580,545 575,580",
  "G:575,580 720,520 800,490",
  "G:590,600 700,565 740,540",
  "G:575,580 630,660 700,620 770,600",
  "G:720,440 725,520 740,600 760,635",
  "G:700,530 700,640",
  "G:750,510 770,600 775,640",
  "G:740,545 800,545 805,620 700,630",
  "G:580,610 665,665 690,640",
  "G:805,620 860,665 890,720 915,790",
  "G:745,640 780,780 815,770 880,800 915,800",
  "G:770,630 800,740 825,780",
  "G:895,495 905,600 880,620 865,655",
  "G:905,545 1000,515 1060,545 1220,555",
  "G:905,605 980,650 1030,665 1065,640 1115,640 1125,690 1235,690",
  "G:915,775 1250,765",
  "G:915,790 915,860 930,905 1070,930 1160,900 1210,850 1255,800 1262,690 1245,660 1235,690 1250,765 1225,840",
  "G:635,820 680,815 740,830 770,815 785,780",
  "G:565,920 630,925 660,965 740,970 800,980 860,925 930,920 930,900",
  "G:800,975 820,1060 880,1150 870,1190",
  "G:1260,675 1340,705 1390,685 1450,685 1480,740 1505,770 1530,835 1500,855 1440,860 1400,895 1330,930 1200,950 1190,870 1225,840",
  "G:1480,735 1520,750 1560,775",
  "G:1070,930 1030,940 1010,965 1035,1000 1060,1050 1120,1065 1235,1070",
  "G:1345,935 1270,970 1210,960 1205,990 1235,1050 1240,1110 1260,1140 1240,1200",
];

type Kind = "town" | "city" | "park" | "ic" | "air" | "eup";
const LABEL_STYLE: Record<Kind, { size: number; fill: string; spacing: number; weight: number }> = {
  town: { size: 28.5, fill: "#5f5557", spacing: 1.6, weight: 500 },
  eup: { size: 31, fill: "#5f5557", spacing: 1.2, weight: 500 },
  city: { size: 35, fill: "#3a3638", spacing: 1, weight: 500 },
  park: { size: 35, fill: "#52665b", spacing: 1, weight: 500 },
  ic: { size: 25, fill: "#3a3638", spacing: 0, weight: 500 },
  air: { size: 31.5, fill: "#2f4c7c", spacing: 0.6, weight: 500 },
};

type Anchor = "start" | "middle" | "end";
const LABELS: [Kind, string, string, number, number, Anchor?][] = [
  ["park", "A", "웅석봉", 718, 46],
  ["park", "A", "군립공원", 720, 124],
  ["town", "A", "삼장면", 318, 435],
  ["town", "A", "신안면", 1460, 395],
  ["town", "A", "단성면", 1043, 825],
  ["ic", "A", "단성", 1287, 947],
  ["town", "A", "시천면", 122, 1120],
  ["town", "B", "대의면", 992, 163],
  ["town", "B", "생비량면", 408, 320],
  ["town", "B", "칠곡면", 1278, 320],
  ["town", "B", "미천면", 788, 697],
  ["town", "B", "대곡면", 1222, 1087],
  ["town", "B", "집현면", 630, 1178],
  ["town", "B", "명석면", 184, 1170],
  ["town", "B", "금산면", 1112, 1557],
  ["town", "B", "가례면", 1560, 262],
  ["town", "B", "화정면", 1495, 893],
  ["town", "C", "정곡면", 705, 66],
  ["town", "C", "용덕면", 333, 245],
  ["city", "C", "의령군", 222, 553],
  ["town", "C", "법수면", 815, 503],
  ["eup", "C", "의령읍", 232, 722],
  ["town", "C", "대산면", 1377, 310],
  ["ic", "C", "장지", 812, 893],
  ["ic", "C", "군북", 642, 987],
  ["city", "C", "함안군", 1187, 980],
  ["park", "C", "입곡", 1420, 996, "start"],
  ["park", "C", "군립공원", 1357, 1082, "start"],
  ["town", "C", "군북면", 705, 1115],
  ["town", "C", "함안면", 1313, 1350],
  ["ic", "C", "지수", 300, 1485],
  ["town", "D", "청암면", 63, 138, "end"],
  ["town", "D", "적량면", 126, 940, "end"],
  ["city", "D", "하동군", 47, 1277, "end"],
  ["town", "D", "옥종면", 683, 150],
  ["town", "D", "수곡면", 1145, 68],
  ["town", "D", "대평면", 1480, 87],
  ["town", "D", "횡천면", 385, 803],
  ["town", "D", "북천면", 755, 803],
  ["town", "D", "곤명면", 1258, 795],
  ["town", "D", "양보면", 590, 1257],
  ["ic", "D", "곤양", 1407, 1435],
  ["ic", "E", "서진주", 322, 312],
  ["city", "E", "진주시", 780, 250],
  ["ic", "E", "문산", 1127, 400],
  ["eup", "E", "문산읍", 1323, 400],
  ["ic", "E", "진성", 1565, 223],
  ["ic", "E", "진주", 888, 505],
  ["town", "E", "내동면", 325, 583],
  ["ic", "E", "진주", 711, 705],
  ["ic", "E", "사천", 670, 885],
  ["town", "E", "축동면", 455, 910],
  ["eup", "E", "사천읍", 855, 1033],
  ["air", "E", "사천공항", 637, 1130],
  ["town", "E", "곤양면", 88, 1153],
  ["ic", "E", "축동", 345, 1170],
  ["town", "E", "정동면", 977, 1393],
  ["town", "E", "사남면", 770, 1517],
  ["ic", "E", "연화산", 1342, 1190],
  ["town", "E", "영현면", 1532, 1415],
  ["town", "F", "영오면", 40, 920],
  ["town", "F", "사봉면", 350, 65],
  ["town", "F", "여항면", 1453, 95],
  ["town", "F", "이반성면", 723, 368],
  ["town", "F", "일반성면", 378, 460],
  ["town", "F", "진전면", 1037, 463],
  ["town", "F", "진동면", 1487, 492, "start"],
  ["town", "F", "개천면", 410, 977],
  ["town", "F", "구만면", 755, 1003],
  ["town", "F", "회화면", 1085, 1160],
  ["park", "F", "연화산", 200, 1193],
  ["park", "F", "도립공원", 205, 1276],
  ["town", "F", "마암면", 735, 1425],
];

const NATIONAL: [string, string, number, number][] = [
  ["A", "59", 519, 512],
  ["A", "3", 1296, 601],
  ["A", "20", 107, 1014],
  ["C", "20", 560, 148],
  ["C", "79", 527, 868],
  ["E", "33", 413, 58],
  ["E", "2", 36, 625],
  ["F", "2", 547, 461],
  ["F", "14", 1062, 970],
];

const LOCAL: [string, string, number, number][] = [
  ["A", "1049", 1527, 988],
  ["B", "1006", 88, 188],
  ["B", "1013", 1507, 70],
  ["B", "1007", 1457, 1543],
  ["C", "1037", 67, 125],
  ["C", "1029", 682, 650],
  ["C", "1040", 357, 975],
  ["C", "67", 1152, 858],
  ["C", "1004", 632, 1393],
  ["D", "1014", 833, 298],
  ["D", "1003", 443, 922],
  ["D", "58", 1205, 922],
  ["D", "1005", 1180, 1320],
  ["D", "1002", 1522, 1305],
  ["D", "1001", 1587, 822],
  ["E", "1009", 1180, 160],
  ["E", "1030", 1218, 1040],
  ["F", "1021", 1375, 445],
  ["F", "1037", 365, 710],
  ["F", "1002", 957, 1332],
];

const JUNCTIONS: [string, number, number, boolean?][] = [
  ["A", 1285, 880],
  ["C", 811, 826],
  ["C", 641, 922],
  ["C", 300, 1417],
  ["D", 1403, 1368],
  ["D", 988, 1510],
  ["E", 323, 243],
  ["E", 1128, 333],
  ["E", 882, 430],
  ["E", 663, 817],
  ["E", 345, 1102],
  ["E", 1345, 1123],
  ["E", 1565, 155],
  ["E", 707, 642, true],
];

/* mountains: tile, u, v, rx, ry, colour, opacity */
type Patch = [string, number, number, number, number, string, number];
const MOUNTAINS: Patch[] = [
  ["A", 20, 480, 80, 180, "#a9b39c", 0.75],
  ["A", 150, 90, 110, 70, "#b3bba6", 0.6],
  ["A", 760, 250, 50, 150, "#aab59c", 0.65],
  ["A", 700, 600, 40, 170, "#bcc4b0", 0.5],
  ["A", 260, 950, 70, 230, "#bfc5b4", 0.5],
  ["A", 1050, 500, 35, 140, "#d0d2cc", 0.6],
  ["A", 850, 150, 120, 70, "#d3d5cd", 0.5],
  ["A", 700, 1350, 190, 80, "#cdd0c7", 0.45],
  ["A", 150, 1420, 160, 60, "#c2c8b8", 0.5],
  ["A", 1400, 150, 90, 70, "#d6d7d2", 0.6],
  ["A", 420, 200, 90, 90, "#d8d9d4", 0.5],
  ["B", 280, 620, 60, 60, "#cbccc6", 0.65],
  ["B", 1150, 250, 120, 60, "#d2d3cd", 0.55],
  ["B", 1450, 130, 120, 55, "#bfc6b4", 0.7],
  ["B", 1500, 650, 110, 110, "#dcdcd6", 0.6],
  ["B", 1300, 650, 40, 120, "#d3d3ce", 0.5],
  ["B", 400, 120, 100, 50, "#dddfd9", 0.6],
  ["C", 20, 800, 50, 80, "#cbccc5", 0.6],
  ["C", 60, 100, 60, 60, "#d3d4cf", 0.6],
  ["D", 320, 220, 100, 120, "#ced1c8", 0.6],
  ["D", 80, 550, 120, 100, "#d1d3c9", 0.6],
  ["D", 650, 450, 90, 80, "#cccec4", 0.6],
  ["D", 580, 680, 30, 80, "#cdcec8", 0.6],
  ["D", 780, 1050, 100, 50, "#d1d3cb", 0.6],
  ["D", 330, 1300, 50, 100, "#d8d9d2", 0.6],
  ["E", 1350, 1400, 150, 60, "#cfd0ca", 0.5],
  ["E", 950, 1480, 90, 40, "#d9dad3", 0.6],
  ["F", 1200, 500, 80, 120, "#c6c9be", 0.65],
  ["F", 1350, 250, 80, 120, "#c6c9be", 0.6],
  ["F", 1080, 120, 90, 70, "#d2d3cb", 0.5],
  ["F", 750, 650, 70, 100, "#d5d6cf", 0.5],
  ["F", 250, 900, 90, 40, "#d2d3cc", 0.5],
  ["F", 800, 1000, 120, 80, "#d8d9d2", 0.4],
  ["F", 100, 1350, 110, 70, "#c8cbc0", 0.65],
];

const PLAINS: Patch[] = [
  ["A", 1150, 300, 30, 170, "#f1f0e9", 0.7],
  ["A", 1400, 850, 60, 110, "#f2f0e9", 0.9],
  ["C", 950, 560, 320, 240, "#f3f0ea", 1],
  ["C", 1250, 250, 210, 130, "#f3f0ea", 1],
  ["C", 1250, 1150, 170, 50, "#f1eee8", 0.8],
  ["C", 420, 480, 60, 180, "#f3f0ea", 0.8],
  ["D", 120, 1150, 60, 90, "#f2f1e9", 0.9],
  ["D", 1250, 1250, 70, 120, "#eff0e8", 0.7],
  ["D", 1300, 800, 120, 40, "#eff0e8", 0.7],
  ["E", 200, 1300, 150, 120, "#f2f0ea", 0.95],
  ["E", 800, 1150, 190, 70, "#f2f0ea", 0.95],
  ["E", 750, 850, 80, 60, "#f1efe9", 0.8],
  ["F", 1280, 1000, 170, 70, "#f2eee8", 0.9],
  ["F", 1250, 1250, 150, 90, "#f3efe9", 0.95],
  ["F", 620, 300, 40, 100, "#f0ede7", 0.8],
];

const MapLabel = styled.text`
  font-family: ${FONT};
  paint-order: stroke;
  stroke: rgba(255, 255, 255, 0.75);
  stroke-width: 4px;
  stroke-linejoin: round;
`;

const ShieldText = styled.text`
  font-family: Roboto, "Liberation Sans", sans-serif;
  text-anchor: middle;
`;

const strokes = (list: string[], color: string, width: number) => (
  <g fill="none" stroke={color} strokeWidth={width} strokeLinecap="round" strokeLinejoin="round">
    {list.map((s, i) => (
      <path key={i} d={curve(s)} />
    ))}
  </g>
);

const patches = (list: Patch[]) => (
  <g filter="url(#relief)">
    {list.map(([t, u, v, rx, ry, c, o], i) => {
      const [cx, cy] = at(t, u, v);
      return <ellipse key={i} cx={cx} cy={cy} rx={rx} ry={ry} fill={c} opacity={o} />;
    })}
  </g>
);

const RAIL_WEST =
  "D:0,1340 130,1230 350,930 500,905 690,865 930,905 1010,900 1160,850 1330,800 1400,740 1500,660 1568,620 E:0,600 160,580 400,585 700,570 830,520";
const RAIL_EAST =
  "C:1560,1165 1440,1190 1250,1195 1100,1140 990,1110 900,1145 720,1230 680,1300 650,1450 600,1568 F:480,230 400,280 200,300 0,330 E:1450,380 1250,480 1120,520 950,500";
const EXPRESSWAY_NAME = "A:1500,1265 1545,1310 B:20,1400 50,1520 E:30,-5 130,60";

const RegionMap = () => {
  const edge = trace(CITY_EDGE, true);
  const [planeX, planeY] = at("E", 637, 1048);
  const [sx, sy] = at("D", 55, 1470);
  return (
    <MapView viewBox="951.5 1799.5 2456 1482" preserveAspectRatio="none">
      <defs>
        <filter id="relief" x="-20%" y="-20%" width="140%" height="140%">
          <feGaussianBlur stdDeviation="20" />
        </filter>
        <filter id="contours" x="0" y="0" width="100%" height="100%" colorInterpolationFilters="sRGB">
          <feTurbulence type="fractalNoise" baseFrequency="0.008" numOctaves="4" seed="11" />
          <feColorMatrix values="0 0 0 0 0.56  0 0 0 0 0.59  0 0 0 0 0.54  1.6 0 0 0 -0.3" />
          <feComponentTransfer>
            <feFuncA type="discrete" tableValues="0 0 0 0.03 0.06 0.1 0.15 0.2 0.25 0.3" />
          </feComponentTransfer>
        </filter>
        <path id="expressway" d={curve(EXPRESSWAY_NAME)} />
      </defs>
      <rect x="940" y="1790" width="2480" height="1500" fill="#eaebe5" />
      <rect x="940" y="1790" width="2480" height="1500" fill="#ffffff" filter="url(#contours)" />
      {patches(MOUNTAINS)}
      {patches(PLAINS)}

      <g fill="#b4d8a6">
        <path d={trace("A:1410,690 1440,700 1410,745", true)} />
        <path d={trace("A:1365,960 1382,990 1365,1015", true)} />
        <path d={trace("F:440,405 475,405 482,440 500,490 470,480 430,440", true)} />
        <path d={trace("E:445,1320 490,1325 480,1350", true)} />
        <path d={trace("E:330,1460 350,1475 335,1490", true)} />
        <path d={trace("F:415,345 440,340 445,360", true)} />
      </g>

      {strokes(CREEKS, "#a9c0d6", 1.8)}
      <g fill="none" stroke="#a2b8cf" strokeLinecap="round" strokeLinejoin="round">
        {WATER_LINES.map(([w, s], i) => (
          <path key={i} d={curve(s)} strokeWidth={w} />
        ))}
      </g>
      <g fill="#a2b8cf">
        {LAKES.map((s, i) => (
          <path key={i} d={trace(s, true)} />
        ))}
      </g>

      <g fill="none" stroke="#a3a18c" strokeWidth="1.8" strokeDasharray="6 5">
        {TRAILS.map((s, i) => (
          <path key={i} d={trace(s)} />
        ))}
      </g>
      {strokes(PARK_EDGES, "#f3f4ef", 5)}
      <g fill="none" stroke="#a0a39b" strokeWidth="1.600" strokeDasharray="8 5">
        {PARK_EDGES.map((s, i) => (
          <path key={i} d={curve(s)} />
        ))}
      </g>

      {strokes(STREETS, "#d8ce8e", 4.5)}
      {strokes(STREETS, "#fbf6cf", 2.8)}
      {strokes(ROADS, "#cdb75c", 9.4)}
      {strokes(ROADS, "#fbe386", 6.4)}
      {strokes(MAIN_ROADS, "#cb9c45", 11)}
      {strokes(MAIN_ROADS, "#f9cf69", 7.8)}

      {strokes([RAIL_WEST], "#929292", 5)}
      <path d={curve(RAIL_WEST)} fill="none" stroke="#f4f4f4" strokeWidth="2.4" strokeDasharray="34 30" />
      {strokes([RAIL_EAST], "#7d80b2", 5)}
      <path d={curve(RAIL_EAST)} fill="none" stroke="#eeeef6" strokeWidth="2.4" strokeDasharray="40 38" />

      {strokes(HIGHWAYS, "#b97136", 15)}
      {strokes(HIGHWAYS, "#f3a256", 11.6)}
      <text fontFamily={FONT} fontSize="24" fontWeight="700" fill="#9a5028" stroke="#f3b27c" strokeWidth="6" paintOrder="stroke">
        <textPath href="#expressway">통영대전고속도로</textPath>
      </text>

      {LABELS.map(([kind, t, text, u, v, anchor = "middle"], i) => {
        const st = LABEL_STYLE[kind];
        const [x, y] = at(t, u, v);
        return (
          <MapLabel
            key={i}
            x={x}
            y={y + st.size * 0.37}
            fontSize={st.size}
            fontWeight={st.weight}
            letterSpacing={st.spacing}
            fill={st.fill}
            textAnchor={anchor}
          >
            {text}
          </MapLabel>
        );
      })}

      {LOCAL.map(([t, text, u, v], i) => {
        const [x, y] = at(t, u, v);
        return (
          <g key={i}>
            <rect x={x - 25} y={y - 14} width="50" height="28" rx="4" fill="#f9ee9c" stroke="#a89a4e" strokeWidth="2" />
            <ShieldText
              x={x}
              y={y + 8.5}
              fontSize="24"
              fontWeight="500"
              fill="#2e2b1c"
              textLength={text.length * 11.2}
              lengthAdjust="spacingAndGlyphs"
            >
              {text}
            </ShieldText>
          </g>
        );
      })}

      {NATIONAL.map(([t, text, u, v], i) => {
        const [x, y] = at(t, u, v);
        return (
          <g key={i}>
            <ellipse cx={x} cy={y} rx="24" ry="18" fill="#5470e6" stroke="#4560cf" strokeWidth="1.500" />
            <ShieldText
              x={x}
              y={y + 8.5}
              fontSize="24"
              fontWeight="700"
              fill="#ffffff"
              textLength={text.length * 12}
              lengthAdjust="spacingAndGlyphs"
            >
              {text}
            </ShieldText>
          </g>
        );
      })}

      {JUNCTIONS.map(([t, u, v, hub], i) => {
        const [x, y] = at(t, u, v);
        return (
          <g key={i}>
            <ellipse cx={x} cy={y} rx="15" ry="11.500" fill={hub ? "#fbf15e" : "#fffef8"} stroke="#6a5c3c" strokeWidth="2" />
            <ShieldText x={x} y={y + 5} fontSize="13.500" fontWeight="700" fill="#4e452f">
              {hub ? "JC" : "IC"}
            </ShieldText>
          </g>
        );
      })}

      {([["E", "35", 1080, 975], ["F", "10", 155, 58]] as [string, string, number, number][]).map(([t, text, u, v]) => {
        const [x, y] = at(t, u, v);
        return (
          <g key={text} transform={`translate(${x} ${y})`}>
            <path
              d="M-20 -21q6 2 10-2 5 3 10-1 5 4 10 1 4 4 10 2l1 9q4 8 1 20-1 8-9 9-9 0-13 3-4-3-13-3-8-1-9-9-3-12 1-20z"
              fill="#4a68dd"
              stroke="#ffffff"
              strokeWidth="2"
            />
            <path d="M-20 -21q6 2 10-2 5 3 10-1 5 4 10 1 4 4 10 2l1 9h-42z" fill="#cf3434" />
            <path d="M-21 -12h42" stroke="#ffffff" strokeWidth="2" />
            <ShieldText x="0" y="11" fontSize="24" fontWeight="700" fill="#ffffff" textLength="24" lengthAdjust="spacingAndGlyphs">
              {text}
            </ShieldText>
          </g>
        );
      })}

      <path
        transform={`translate(${planeX} ${planeY})`}
        d="M0 -17q3 3 3 9l12 9v4L3 1 2 9l6 4v3L0 14l-8 2v-3l6-4-1-8-12 4v-4l12-9q0-6 3-9z"
        fill="#3a5c94"
        stroke="#ffffff"
        strokeWidth="1.500"
        paintOrder="stroke"
      />

      <path d={edge} fill="#fffefd" fillOpacity="0.76" stroke="#2a5a8e" strokeWidth="5.2" strokeLinejoin="round" />
      <g fill="none" stroke="#2a5a8e" strokeWidth="5.200" strokeLinejoin="round" strokeLinecap="round">
        {DISTRICT_EDGES.map((s, i) => (
          <path key={i} d={trace(s)} />
        ))}
        <path d={trace("E:928,211 1395,231")} strokeWidth="9" />
      </g>

      <path d={`M${sx} ${sy - 13}V${sy}H${sx + 141}V${sy - 13}`} fill="none" stroke="#000000" strokeWidth="4.200" />
      <MapLabel x={sx + 151} y={sy + 8} fontSize="22.500" fontWeight="700" fill="#222222">
        4km
      </MapLabel>
      <MapLabel x={sx + 219} y={sy + 6} fontSize="28" fontWeight="500" fill="#222222">
        kakao
      </MapLabel>
    </MapView>
  );
};

export default function App() {
  return (
    <>
      <GlobalStyle />
      <Page>
        <Main>
          <Header>
            <MenuButton>
              <MenuLine />
              <MenuLine />
              <MenuLine />
            </MenuButton>
            <Logo>
              <LogoKorean>진주커</LogoKorean>
              <LogoLatin>Pick</LogoLatin>
              <LogoCursor viewBox="1232 238 212 215">
                <path
                  d="M1237 244L1438 316Q1440 320 1436 324L1381 358L1413 392Q1418 399 1412 404L1393 423Q1388 427 1383 421L1352 388L1318 444Q1312 448 1307 442Z"
                  fill="#ffffff"
                  stroke="#3c4048"
                  strokeWidth="4"
                  strokeLinejoin="round"
                />
                <path d="M1240 248L1366 372L1400 408L1388 421L1352 384L1313 441Z" fill="#dfe6e8" />
              </LogoCursor>
            </Logo>
          </Header>

          <Panel>
            <Title>어떤 카페를 찾으시나요?</Title>
            <Subtitle>찾으시는 조건을 1개 ~ 3개 선택해주세요.</Subtitle>
            <ConditionGrid>
              {CONDITIONS.map(({ label, Icon }) => (
                <Condition key={label}>
                  <Icon />
                  {label}
                </Condition>
              ))}
            </ConditionGrid>
            <Condition>원하는 조건이 없어요.</Condition>
          </Panel>

          <Caption $top={71} $spacing={1.8}>
            지도에서 구역을 최대 3개 선택해주세요.
          </Caption>
          <RegionMap />

          <Caption $top={136} $spacing={1.9}>
            아이스 아메리카노의 최대 가격을 선택해주세요.
          </Caption>
          <PriceRow>
            <PriceLabel>아이스 아메리카노</PriceLabel>
            <SliderTrack>
              <SliderThumb />
            </SliderTrack>
            <PriceBadge>
              <PriceDigits>0</PriceDigits>원
            </PriceBadge>
          </PriceRow>
          <SearchButton>카페 찾기</SearchButton>
          <FooterEdge>
            <FooterTab />
          </FooterEdge>
        </Main>
        <ScrollTrack>
          <ScrollThumb />
        </ScrollTrack>
      </Page>
    </>
  );
}
